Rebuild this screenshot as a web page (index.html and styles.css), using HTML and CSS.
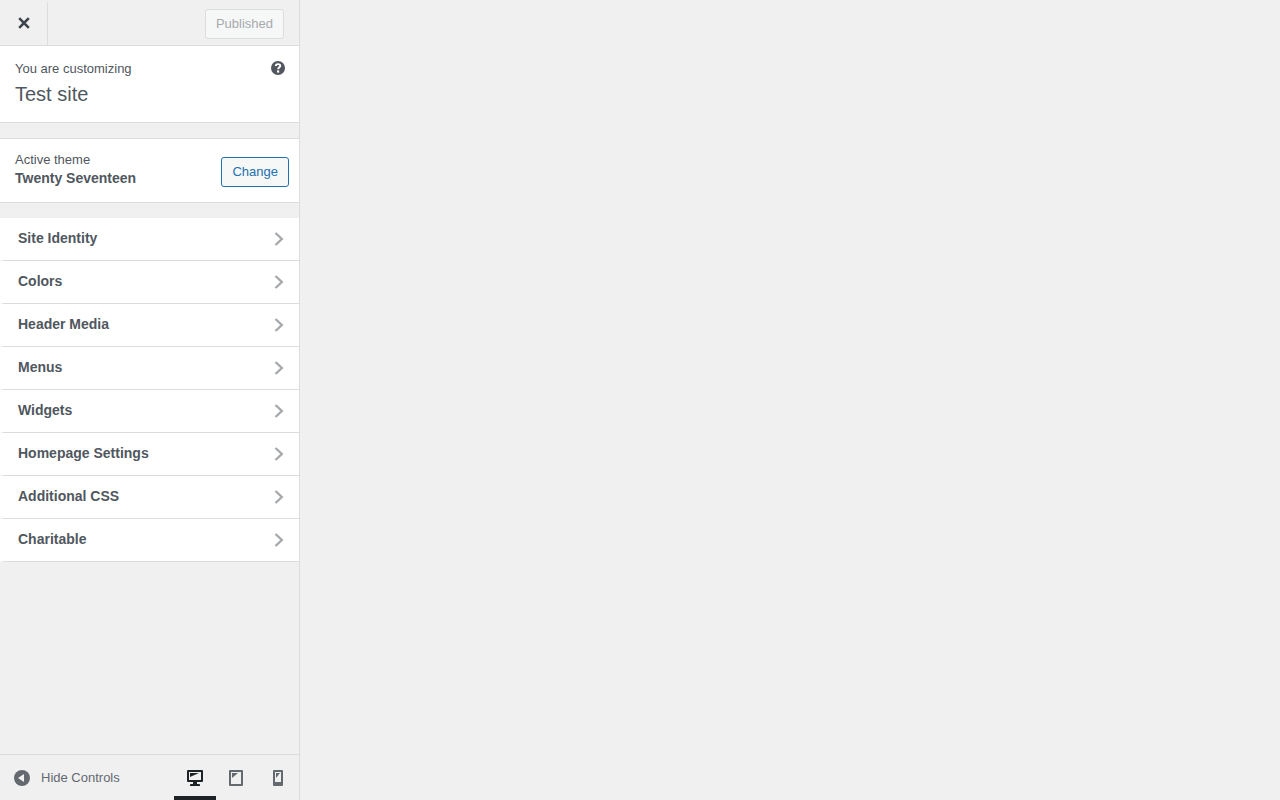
FILE: index.html
```html
<!DOCTYPE html>
<html lang="en">
  <head>
    <meta charset="UTF-8" />
    <meta name="viewport" content="width=device-width, initial-scale=1.0" />
    <title>Customize: Test site</title>
    <link rel="stylesheet" href="styles.css">
  </head>
  <body>
    <form class="sidebar">
      <div class="header-actions">
        <button type="button" class="close" aria-label="Close">
          <svg width="20" height="20" viewBox="0 0 20 20"><path d="M5.2 5.2l9.6 9.6M14.8 5.2l-9.6 9.6" fill="none" stroke="currentColor" stroke-width="2.6" /></svg>
        </button>
        <button type="submit" class="button save" disabled>Published</button>
      </div>

      <div class="sidebar-content">
        <div class="info">
          <div>
            <span class="notice">You are customizing</span>
            <h1 class="site-title">Test site</h1>
          </div>
          <button type="button" class="help" aria-label="Help">
            <svg width="14" height="14" viewBox="0 0 14 14"><circle cx="7" cy="7" r="7" fill="currentColor" /><path d="M4.8 4.9c0-1.3 1-1.8 2.2-1.8s2.3.6 2.3 1.8c0 1.4-2.1 1.4-2.1 3.3" fill="none" stroke="#fff" stroke-width="1.9" /><rect x="6" y="9.4" width="2.2" height="2.2" fill="#fff" /></svg>
          </button>
        </div>

        <div class="theme">
          <div>
            <span class="notice">Active theme</span>
            <h2 class="theme-name">Twenty Seventeen</h2>
          </div>
          <button type="button" class="button">Change</button>
        </div>

        <ul class="sections">
          <li><button type="button" class="section">Site Identity <svg class="arrow" viewBox="0 0 10 14"><path d="M1.5 1L7.8 7l-6.3 6" /></svg></button></li>
          <li><button type="button" class="section">Colors <svg class="arrow" viewBox="0 0 10 14"><path d="M1.5 1L7.8 7l-6.3 6" /></svg></button></li>
          <li><button type="button" class="section">Header Media <svg class="arrow" viewBox="0 0 10 14"><path d="M1.5 1L7.8 7l-6.3 6" /></svg></button></li>
          <li><button type="button" class="section">Menus <svg class="arrow" viewBox="0 0 10 14"><path d="M1.5 1L7.8 7l-6.3 6" /></svg></button></li>
          <li><button type="button" class="section">Widgets <svg class="arrow" viewBox="0 0 10 14"><path d="M1.5 1L7.8 7l-6.3 6" /></svg></button></li>
          <li><button type="button" class="section">Homepage Settings <svg class="arrow" viewBox="0 0 10 14"><path d="M1.5 1L7.8 7l-6.3 6" /></svg></button></li>
          <li><button type="button" class="section">Additional CSS <svg class="arrow" viewBox="0 0 10 14"><path d="M1.5 1L7.8 7l-6.3 6" /></svg></button></li>
          <li><button type="button" class="section">Charitable <svg class="arrow" viewBox="0 0 10 14"><path d="M1.5 1L7.8 7l-6.3 6" /></svg></button></li>
        </ul>
      </div>

      <div class="footer-actions">
        <button type="button" class="collapse">
          <svg width="16" height="16" viewBox="0 0 16 16"><circle cx="8" cy="8" r="8" fill="currentColor" /><path d="M10 4v8L4 8z" fill="#f0f0f0" /></svg>
          Hide Controls
        </button>
        <div class="devices">
          <button type="button" class="device active" aria-label="Desktop">
            <svg width="16" height="16" viewBox="0 0 16 16" fill="currentColor"><path fill-rule="evenodd" d="M1 0h14a1 1 0 0 1 1 1v10a1 1 0 0 1-1 1h-5v2h2a1 1 0 0 1 1 1v1H3v-1a1 1 0 0 1 1-1h2v-2H1a1 1 0 0 1-1-1V1a1 1 0 0 1 1-1zM2 2v8h12V2z" /><path d="M3 3h9L3 7z" /></svg>
          </button>
          <button type="button" class="device" aria-label="Tablet">
            <svg width="15" height="16" viewBox="0 0 15 16" fill="currentColor"><path fill-rule="evenodd" d="M1 0h12a1 1 0 0 1 1 1v14a1 1 0 0 1-1 1H1a1 1 0 0 1-1-1V1a1 1 0 0 1 1-1zM2 2v12h10V2z" /><path d="M3 3h6L3 8z" /></svg>
          </button>
          <button type="button" class="device" aria-label="Mobile">
            <svg width="10" height="16" viewBox="0 0 10 16" fill="currentColor"><path fill-rule="evenodd" d="M1 0h8a1 1 0 0 1 1 1v14a1 1 0 0 1-1 1H1a1 1 0 0 1-1-1V1a1 1 0 0 1 1-1zM2 2v10h6V2z" /><path d="M3 3h4L3 8z" /></svg>
          </button>
        </div>
      </div>
    </form>
    <main class="preview"></main>
  </body>
</html>
```

FILE: styles.css
```css
* {
  box-sizing: border-box;
  margin: 0;
  padding: 0;
}

body {
  display: flex;
  height: 100vh;
  background: #f0f0f0;
  color: #50575e;
  font: 13px/18px "Liberation Sans", Arial, sans-serif;
}

button {
  font: inherit;
  color: inherit;
  background: none;
  border: none;
  cursor: pointer;
}

svg {
  display: block;
}

.sidebar {
  display: flex;
  flex-direction: column;
  width: 300px;
  border-right: 1px solid #dcdcde;
}

.preview {
  flex: 1;
}

.header-actions {
  display: flex;
  align-items: center;
  justify-content: space-between;
  height: 46px;
  padding-right: 15px;
  border-bottom: 1px solid #dcdcde;
}

.close {
  display: flex;
  align-items: center;
  justify-content: center;
  width: 48px;
  height: 45px;
  padding-bottom: 3px;
  border-top: 4px solid transparent;
  border-right: 1px solid #dcdcde;
  color: #3c434a;
}

.button {
  height: 30px;
  padding: 0 10px;
  border: 1px solid #2271b1;
  border-radius: 3px;
  background: #f6f7f7;
  color: #2271b1;
}

.save {
  margin-top: 2px;
  border-color: #dcdcde;
  color: #a7aaad;
  cursor: default;
}

.sidebar-content {
  flex: 1;
  overflow: auto;
}

.info {
  display: flex;
  align-items: flex-start;
  justify-content: space-between;
  padding: 14px 14px 11px 15px;
  border-bottom: 1px solid #dcdcde;
  background: #fff;
}

.notice {
  display: block;
}

.site-title {
  font-size: 20px;
  font-weight: 400;
  line-height: 33px;
}

.help {
  margin-top: 1px;
}

.theme {
  display: flex;
  align-items: flex-end;
  justify-content: space-between;
  margin: 15px 0;
  padding: 12px 10px 15px 15px;
  border-top: 1px solid #dcdcde;
  border-bottom: 1px solid #dcdcde;
  background: #fff;
}

.theme-name {
  font-size: 14px;
  line-height: 18px;
}

.sections {
  list-style: none;
}

.section {
  display: flex;
  align-items: center;
  justify-content: space-between;
  width: 100%;
  padding: 10px 15px 11px 14px;
  border-left: 4px solid #fff;
  border-bottom: 1px solid #dcdcde;
  background: #fff;
  font-size: 14px;
  font-weight: 600;
  line-height: 21px;
  text-align: left;
}

.arrow {
  width: 10px;
  height: 14px;
  fill: none;
  stroke: #a7aaad;
  stroke-width: 2.4;
}

.footer-actions {
  display: flex;
  justify-content: space-between;
  height: 46px;
  border-top: 1px solid #dcdcde;
}

.collapse {
  display: flex;
  align-items: center;
  gap: 11px;
  padding-left: 14px;
  color: #646970;
}

.devices {
  display: grid;
  grid-template-columns: 42px 41px 42px;
}

.device {
  display: flex;
  align-items: center;
  justify-content: center;
  padding-top: 4px;
  border-bottom: 4px solid transparent;
  color: #646970;
}

.device.active {
  border-bottom-color: #1d2327;
  color: #1d2327;
}
```
